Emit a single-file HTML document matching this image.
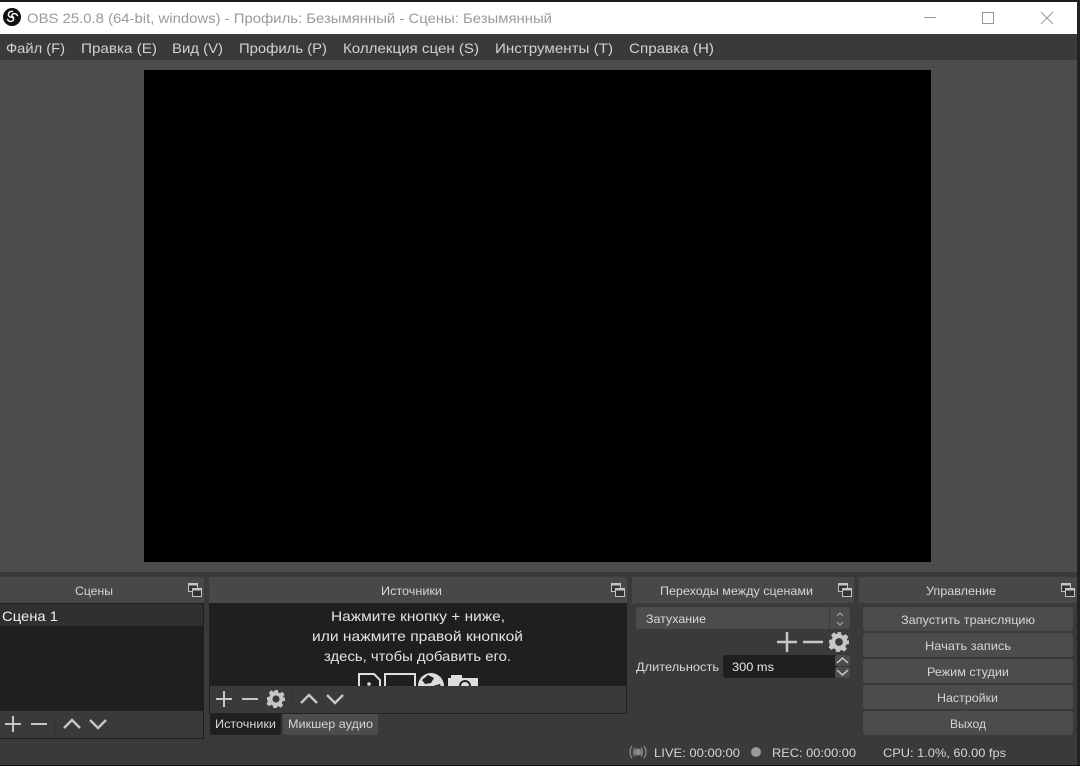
<!DOCTYPE html>
<html lang="ru"><head><meta charset="utf-8"><title>OBS</title>
<style>html,body{margin:0;padding:0;background:#3a3a3a;overflow:hidden}svg{display:block}
text{font-family:"Liberation Sans",sans-serif}
.m{font-size:14px;fill:#cfd3d6}.s{font-size:12px;fill:#d6d6d6}.l{font-size:14px;fill:#e4e4e4}
.ic{fill:none;stroke:#c6c6c6;stroke-width:2}</style></head><body>
<svg width="1080" height="766" viewBox="0 0 1080 766" xmlns="http://www.w3.org/2000/svg">
<defs>
<g id="float" fill="none" stroke="#c4c4c4" stroke-width="1"><rect x=".5" y=".5" width="9" height="8" fill="#333"/><rect x="4.500" y="5.500" width="9" height="8" fill="#333"/><path d="M1 1.500h8M5 6.500h8" stroke-width="2"/></g>
<g id="plus" class="ic"><path d="M-8 0H8M0-8V8"/></g>
<g id="minus" class="ic"><path d="M-8 0H8"/></g>
<g id="up" class="ic" style="stroke-width:2.400"><path d="M-8 4L0-4L8 4"/></g>
<g id="down" class="ic" style="stroke-width:2.400"><path d="M-8-4L0 4L8-4"/></g>
<g id="gear"><path fill="#c6c6c6" fill-rule="evenodd" d="M-1.800-9h3.600l.5 2.500 1.700.7 2.100-1.400 2.500 2.500-1.400 2.100.7 1.700L9-1.900v3.800l-2.500.5-.7 1.700 1.400 2.100-2.500 2.500-2.100-1.400-1.700.7L.9 9h-3.600l-.5-2.500-1.700-.7-2.100 1.400-2.500-2.500 1.400-2.100-.7-1.700L-9 1.900v-3.800l2.500-.5.7-1.700-1.400-2.100 2.500-2.500 2.100 1.400 1.700-.7zM0-3.500a3.500 3.500 0 1 0 .01 0z"/></g>
<clipPath id="cp"><rect x="209" y="604" width="418" height="82"/></clipPath>
</defs>
<rect width="1080" height="766" fill="#3a3a3a"/>
<!-- title bar -->
<rect width="1080" height="2" fill="#1c1c1c"/>
<rect y="2" width="1077" height="32" fill="#fff"/>
<circle cx="12" cy="17" r="9" fill="#111"/>
<g fill="none" stroke="#fff" stroke-width="1.400" stroke-linecap="round"><path d="M12.500 11.500C9.500 11 8 13 8.500 15.500C9.500 17.500 11.500 17.500 12.500 16.500"/><path d="M7.500 19.500C9 22 12 22 13.500 20C14 18 13 16.500 12 16.500"/><path d="M17.500 15.500C16 13 13 13 12 15C11.500 16.500 12 18 13.500 18"/></g>
<text x="27" y="23" font-size="14" fill="#9a9a9a" textLength="525" lengthAdjust="spacingAndGlyphs">OBS 25.0.8 (64-bit, windows) - Профиль: Безымянный - Сцены: Безымянный</text>
<path d="M924 17.500H936" stroke="#999" stroke-width="1"/>
<rect x="982.500" y="12.500" width="11" height="11" fill="none" stroke="#999"/>
<path d="M1041 12L1053 24M1053 12L1041 24" stroke="#999" stroke-width="1"/>
<!-- menu -->
<rect y="34" width="1077" height="26" fill="#3a3a3a"/>
<text class="m" x="6" y="53" textLength="59" lengthAdjust="spacingAndGlyphs">Файл (F)</text>
<text class="m" x="81" y="53" textLength="76" lengthAdjust="spacingAndGlyphs">Правка (E)</text>
<text class="m" x="172" y="53" textLength="51" lengthAdjust="spacingAndGlyphs">Вид (V)</text>
<text class="m" x="239" y="53" textLength="88" lengthAdjust="spacingAndGlyphs">Профиль (P)</text>
<text class="m" x="343" y="53" textLength="136" lengthAdjust="spacingAndGlyphs">Коллекция сцен (S)</text>
<text class="m" x="495" y="53" textLength="118" lengthAdjust="spacingAndGlyphs">Инструменты (T)</text>
<text class="m" x="629" y="53" textLength="85" lengthAdjust="spacingAndGlyphs">Справка (H)</text>
<!-- preview -->
<rect y="60" width="1077" height="512" fill="#4c4c4c"/>
<rect x="144" y="70" width="787" height="492" fill="#000"/>
<!-- scenes dock -->
<rect y="577" width="204" height="26" fill="#484848"/>
<text class="s" x="75" y="595" textLength="38" lengthAdjust="spacingAndGlyphs">Сцены</text>
<use href="#float" x="188" y="583"/>
<rect y="603" width="204" height="136" fill="#1f1f1f"/>
<rect y="604" width="203" height="22" fill="#303030"/>
<text x="2" y="621" font-size="14" fill="#f0f0f0" textLength="56" lengthAdjust="spacingAndGlyphs">Сцена 1</text>
<rect y="711" width="203" height="27" fill="#3a3a3a"/>
<use href="#plus" x="13" y="724"/><use href="#minus" x="39" y="724"/>
<path d="M55.500 715V734" stroke="#333"/>
<use href="#up" x="72" y="724"/><use href="#down" x="98" y="724"/>
<!-- sources dock -->
<rect x="209" y="577" width="418" height="26" fill="#484848"/>
<text class="s" x="381" y="595" textLength="61" lengthAdjust="spacingAndGlyphs">Источники</text>
<use href="#float" x="611" y="583"/>
<rect x="209" y="603" width="418" height="111" fill="#1f1f1f"/>
<text class="l" x="331" y="621" textLength="174" lengthAdjust="spacingAndGlyphs">Нажмите кнопку + ниже,</text>
<text class="l" x="312" y="641" textLength="211" lengthAdjust="spacingAndGlyphs">или нажмите правой кнопкой</text>
<text class="l" x="324" y="661" textLength="187" lengthAdjust="spacingAndGlyphs">здесь, чтобы добавить его.</text>
<g clip-path="url(#cp)">
<path d="M359 690V674H374L380 680V690" fill="none" stroke="#ddd" stroke-width="2"/>
<circle cx="369" cy="684" r="1.800" fill="#ddd"/>
<rect x="385" y="674" width="30" height="20" fill="none" stroke="#ddd" stroke-width="2"/>
<circle cx="431" cy="686" r="13" fill="#ddd"/>
<path d="M422 680L428 675L434 678L431 683L425 684zM433 686L440 684L442 690L436 692z" fill="#222"/>
<rect x="448" y="678" width="30" height="14" fill="#ddd"/><rect x="451" y="675" width="11" height="4" fill="#ddd"/>
<circle cx="465" cy="686" r="5" fill="none" stroke="#222" stroke-width="2"/>
</g>
<rect x="210" y="686" width="416" height="27" fill="#3a3a3a"/>
<path d="M626.500 686V713.500H209" fill="none" stroke="#222"/>
<use href="#plus" x="224" y="699"/><use href="#minus" x="250" y="699"/><use href="#gear" x="276" y="699"/>
<path d="M292.500 690V709" stroke="#333"/>
<use href="#up" x="309" y="699"/><use href="#down" x="335" y="699"/>
<!-- tabs -->
<path d="M210 714H281V732Q281 735 278 735H213Q210 735 210 732z" fill="#1f1f1f"/>
<path d="M283 714H378V732Q378 735 375 735H286Q283 735 283 732z" fill="#4c4c4c"/>
<text class="s" x="215" y="728" textLength="61" lengthAdjust="spacingAndGlyphs">Источники</text>
<text class="s" x="288" y="728" textLength="85" lengthAdjust="spacingAndGlyphs">Микшер аудио</text>
<!-- transitions -->
<rect x="632" y="577" width="222" height="26" fill="#484848"/>
<text class="s" x="660" y="595" textLength="153" lengthAdjust="spacingAndGlyphs">Переходы между сценами</text>
<use href="#float" x="838" y="583"/>
<rect x="636" y="607" width="214" height="22" rx="3" fill="#4c4c4c"/>
<path d="M829.500 607V629" stroke="#3a3a3a"/>
<path d="M837 616L840 613L843 616M837 622L840 625L843 622" fill="none" stroke="#aaa"/>
<text class="s" x="646" y="623" textLength="60" lengthAdjust="spacingAndGlyphs">Затухание</text>
<g transform="translate(787 642) scale(1.250)"><use href="#plus"/></g>
<g transform="translate(813 642) scale(1.250)"><use href="#minus"/></g>
<g transform="translate(839 642) scale(1.100)"><use href="#gear"/></g>
<text class="s" x="636" y="671" textLength="83" lengthAdjust="spacingAndGlyphs">Длительность</text>
<rect x="723" y="655" width="114" height="23" rx="3" fill="#1f1f1f"/>
<text class="s" x="732" y="671" textLength="42" lengthAdjust="spacingAndGlyphs" style="fill:#e8e8e8">300 ms</text>
<rect x="835" y="655" width="15" height="11" rx="2" fill="#4c4c4c"/><rect x="835" y="667" width="15" height="11" rx="2" fill="#4c4c4c"/>
<path d="M837 663L842.500 658L848 663M837 670L842.500 675L848 670" fill="none" stroke="#ccc" stroke-width="1.500"/>
<!-- controls -->
<rect x="859" y="577" width="218" height="26" fill="#484848"/>
<text class="s" x="926" y="595" textLength="70" lengthAdjust="spacingAndGlyphs">Управление</text>
<use href="#float" x="1061" y="583"/>
<g fill="#4c4c4c"><rect x="863" y="607" width="210" height="24" rx="3"/><rect x="863" y="633" width="210" height="24" rx="3"/><rect x="863" y="659" width="210" height="24" rx="3"/><rect x="863" y="685" width="210" height="24" rx="3"/><rect x="863" y="711" width="210" height="24" rx="3"/></g>
<text class="s" x="901" y="624" textLength="134" lengthAdjust="spacingAndGlyphs">Запустить трансляцию</text>
<text class="s" x="925" y="650" textLength="86" lengthAdjust="spacingAndGlyphs">Начать запись</text>
<text class="s" x="927" y="676" textLength="82" lengthAdjust="spacingAndGlyphs">Режим студии</text>
<text class="s" x="937" y="702" textLength="61" lengthAdjust="spacingAndGlyphs">Настройки</text>
<text class="s" x="950" y="728" textLength="36" lengthAdjust="spacingAndGlyphs">Выход</text>
<!-- status -->
<g fill="none" stroke="#8a8a8a" stroke-width="1.300"><path d="M632 746Q628 752 632 758M635 747.500Q632 752 635 756.500M644 746Q648 752 644 758M641 747.500Q644 752 641 756.500"/></g>
<circle cx="638" cy="752" r="3.500" fill="#8a8a8a"/>
<text class="s" x="654" y="757" textLength="86" lengthAdjust="spacingAndGlyphs">LIVE: 00:00:00</text>
<circle cx="756" cy="752" r="5" fill="#9a9a9a"/>
<text class="s" x="772" y="757" textLength="84" lengthAdjust="spacingAndGlyphs">REC: 00:00:00</text>
<text class="s" x="883" y="757" textLength="123" lengthAdjust="spacingAndGlyphs">CPU: 1.0%, 60.00 fps</text>
<!-- edges -->
<rect x="1077" y="0" width="3" height="766" fill="#222"/>
<rect y="765" width="1080" height="1" fill="#111"/>
</svg>
</body></html>
